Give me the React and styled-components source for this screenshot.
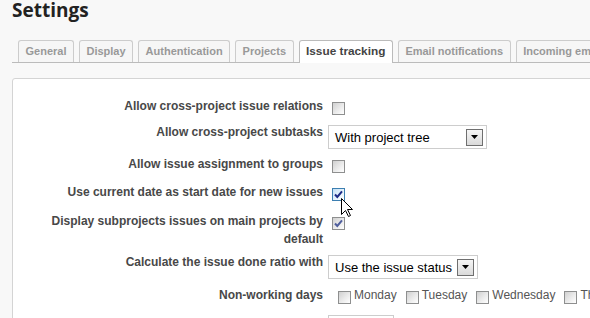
import React from "react";
import styled, { createGlobalStyle } from "styled-components";

const GlobalStyle = createGlobalStyle`
  html, body {
    margin: 0;
    padding: 0;
    overflow: hidden;
    background: #f8f8f8;
  }
  body {
    font-family: "Liberation Sans", Arial, sans-serif;
    font-size: 12px;
    color: #444;
  }
`;

const Page = styled.div`
  width: 590px;
  height: 318px;
  overflow: hidden;
  padding-left: 12px;
  box-sizing: border-box;
`;

const Title = styled.h2`
  margin: 0;
  font-family: "Open Sans", "Liberation Sans", sans-serif;
  font-weight: 700;
  font-size: 19px;
  line-height: 20px;
  color: #222;
`;

const Tabs = styled.ul`
  display: flex;
  align-items: flex-start;
  list-style: none;
  margin: 20px 0 0;
  padding: 0 0 0 1px;
  width: 700px;
  height: 22px;
  border-bottom: 1px solid #bbb;
`;

const Tab = styled.li`
  flex: none;
  margin-left: 5px;
  height: ${(p) => (p.$active ? 23 : 22)}px;
  box-sizing: border-box;
  padding: 0 6.5px;
  border: 1px solid ${(p) => (p.$active ? "#bbb" : "#ccc")};
  border-bottom: none;
  border-radius: 3px 3px 0 0;
  background: ${(p) => (p.$active ? "#fff" : "#f6f6f6")};
  color: ${(p) => (p.$active ? "#444" : "#999")};
  font-weight: bold;
  font-size: ${(p) => (p.$active ? "11.8px" : "11px")};
  line-height: 21px;
  white-space: nowrap;
`;

const Box = styled.div`
  margin-top: 15px;
  width: 700px;
  height: 400px;
  box-sizing: border-box;
  padding-left: 30px;
  background: #fff;
  border: 1px solid #d4d4d4;
  border-radius: 3px;
`;

const Row = styled.div`
  display: flex;
  align-items: flex-start;
  padding-top: ${(p) => p.$pt}px;
`;

const Label = styled.label`
  flex: none;
  width: 280px;
  margin-right: 5px;
  text-align: right;
  font-weight: bold;
  line-height: 18px;
  color: #484848;
`;

const Field = styled.div`
  display: flex;
  align-items: flex-start;
  white-space: nowrap;
`;

const Check = styled.span`
  position: relative;
  flex: none;
  width: 13px;
  height: 13px;
  box-sizing: border-box;
  margin: 5px 0 0 ${(p) => (p.$ml ?? 4)}px;
  border: 1px solid ${(p) => (p.$hover ? "#3c7fb1" : "#8e8f8f")};
  background: ${(p) =>
    p.$hover
      ? "linear-gradient(135deg, #c4e0f6 0%, #e8f4fc 60%, #fff 100%)"
      : "linear-gradient(135deg, #d0d0d0 0%, #ebebeb 55%, #fff 100%)"};
  svg {
    display: block;
  }
`;

const Pointer = styled.svg`
  position: absolute;
  left: 8px;
  top: 9px;
  overflow: visible;
`;

const Select = styled.div`
  display: flex;
  align-items: center;
  justify-content: space-between;
  width: ${(p) => p.$w}px;
  height: 24px;
  box-sizing: border-box;
  margin-top: 2px;
  padding: 0 3px 0 6px;
  border: 1px solid #cdcdcd;
  background: #fff;
  font-size: 13px;
  color: #000;
`;

const DropBtn = styled.span`
  display: flex;
  align-items: center;
  justify-content: center;
  width: 17px;
  height: 17px;
  box-sizing: border-box;
  border: 1px solid #6f6f6f;
  background: linear-gradient(#f6f6f6, #dadada);
`;

const Day = styled.span`
  display: flex;
  align-items: flex-start;
`;

const DayText = styled.span`
  margin-left: 3px;
  line-height: 18px;
  color: #555;
`;

const TextInput = styled.div`
  width: 66px;
  height: 22px;
  box-sizing: border-box;
  border: 1px solid #cdcdcd;
  background: #fff;
`;

const Tick = ({ color }) => (
  <svg width="11" height="11" viewBox="0 0 11 11">
    <path d="M2 5.5 L4.3 8 L9 2.3" fill="none" stroke={color} strokeWidth="2" />
  </svg>
);

const CheckBox = ({ checked, hover, ml, children }) => (
  <Check $hover={hover} $ml={ml}>
    {checked && <Tick color={hover ? "#1d2b86" : "#4f5e9c"} />}
    {children}
  </Check>
);

const Dropdown = ({ value, width }) => (
  <Select $w={width}>
    <span>{value}</span>
    <DropBtn>
      <svg width="7" height="4" viewBox="0 0 7 4">
        <polygon points="0,0 7,0 3.5,4" fill="#000" />
      </svg>
    </DropBtn>
  </Select>
);

const tabs = [
  "General",
  "Display",
  "Authentication",
  "Projects",
  "Issue tracking",
  "Email notifications",
  "Incoming emails",
];

const days = ["Monday", "Tuesday", "Wednesday", "Thursday", "Friday"];

export default function App() {
  return (
    <>
      <GlobalStyle />
      <Page>
        <Title>Settings</Title>
        <Tabs>
          {tabs.map((t) => (
            <Tab key={t} $active={t === "Issue tracking"}>
              {t}
            </Tab>
          ))}
        </Tabs>
        <Box>
          <Row $pt={18}>
            <Label>Allow cross-project issue relations</Label>
            <Field>
              <CheckBox />
            </Field>
          </Row>
          <Row $pt={8}>
            <Label>Allow cross-project subtasks</Label>
            <Field>
              <Dropdown value="With project tree" width={159} />
            </Field>
          </Row>
          <Row $pt={6}>
            <Label>Allow issue assignment to groups</Label>
            <Field>
              <CheckBox />
            </Field>
          </Row>
          <Row $pt={10}>
            <Label>Use current date as start date for new issues</Label>
            <Field>
              <CheckBox checked hover>
                <Pointer width="12" height="19" viewBox="0 0 12 19">
                  <path
                    d="M0.5 0.5 L0.5 16.5 L4.5 12.5 L7.5 18.5 L9.5 17.5 L6.5 11.5 L11.5 11.5 Z"
                    fill="#fff"
                    stroke="#000"
                    strokeWidth="1"
                    strokeLinejoin="miter"
                  />
                </Pointer>
              </CheckBox>
            </Field>
          </Row>
          <Row $pt={11}>
            <Label>Display subprojects issues on main projects by default</Label>
            <Field>
              <CheckBox checked />
            </Field>
          </Row>
          <Row $pt={5}>
            <Label>Calculate the issue done ratio with</Label>
            <Field>
              <Dropdown value="Use the issue status" width={150} />
            </Field>
          </Row>
          <Row $pt={7}>
            <Label>Non-working days</Label>
            <Field>
              {days.map((d, i) => (
                <Day key={d}>
                  <CheckBox ml={i === 0 ? 10 : 9} />
                  <DayText>{d}</DayText>
                </Day>
              ))}
            </Field>
          </Row>
          <Row $pt={11}>
            <Label></Label>
            <Field>
              <TextInput />
            </Field>
          </Row>
        </Box>
      </Page>
    </>
  );
}
